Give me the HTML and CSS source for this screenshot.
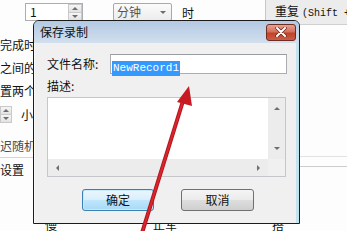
FILE: index.html
```html
<!DOCTYPE html>
<html>
<head>
<meta charset="utf-8">
<link rel="stylesheet" href="styles.css">
</head>
<body>
<div class="app">
  <div class="topbar">
    <div class="toolbar">
      <div class="spin">
        <span class="spin-val">1</span>
        <div class="spin-btns"><span class="sb"><i class="tri up"></i></span><span class="sb"><i class="tri down"></i></span></div>
      </div>
      <div class="combo"><span class="combo-text">分钟</span><i class="tri down"></i></div>
      <span class="unit">时</span>
    </div>
    <div class="side-head">重复<span class="mono">(Shift +</span></div>
  </div>
  <div class="main">
    <div class="leftcol">
      <div class="ln">完成时</div>
      <div class="ln">之间的</div>
      <div class="ln">置两个</div>
      <div class="spinrow">
        <div class="spin-btns small"><span class="sb"><i class="tri up"></i></span><span class="sb"><i class="tri down"></i></span></div>
        <span class="small-label">小</span>
      </div>
      <div class="ln gray sep">迟随机</div>
      <div class="ln">设置</div>
    </div>
    <div class="rightcol">
      <div class="rc-a"></div>
      <div class="rc-b"></div>
    </div>
  </div>
  <div class="bottomrow">
    <span class="b1">慢</span>
    <span class="b2">止军</span>
    <span class="b3">搭</span>
  </div>

  <div class="dialog">
    <div class="titlebar">
      <span class="title">保存录制</span>
      <button class="close" aria-label="关闭">
        <svg width="12" height="10" viewBox="0 0 12 10">
          <path d="M2 1 L10 9 M10 1 L2 9" stroke="#6a2418" stroke-width="3.4" stroke-linecap="round"/>
          <path d="M2 1 L10 9 M10 1 L2 9" stroke="#ffffff" stroke-width="2" stroke-linecap="round"/>
        </svg>
      </button>
    </div>
    <div class="dbody">
      <div class="frow">
        <span class="flabel">文件名称:</span>
        <div class="finput"><span class="sel">NewRecord1</span></div>
      </div>
      <div class="dlabel">描述:</div>
      <div class="textarea">
        <div class="ta-top">
          <div class="ta-content"></div>
          <div class="vscroll"><i class="tri up"></i><i class="tri down"></i></div>
        </div>
        <div class="ta-bottom">
          <div class="hscroll"><i class="tri left"></i><i class="tri right"></i></div>
          <div class="corner"></div>
        </div>
      </div>
      <div class="buttons">
        <button class="btn default">确定</button>
        <button class="btn">取消</button>
      </div>
    </div>
  </div>

  <svg class="arrow" width="347" height="231" viewBox="0 0 347 231">
    <path d="M142 233 L183 101" stroke="#b5141c" stroke-width="4" stroke-linecap="round"/>
    <path d="M142 233 L183 101" stroke="#d8262e" stroke-width="2"/>
    <polygon points="189,86 177,102 192,106" fill="#c81a22"/>
  </svg>
</div>
</body>
</html>
```

FILE: styles.css
```css
html, body {
  margin: 0;
  padding: 0;
}
body {
  font-family: "Noto Sans CJK SC", "Noto Sans", sans-serif;
  font-size: 12px;
  color: #111;
}
.app {
  position: relative;
  width: 347px;
  height: 231px;
  overflow: hidden;
  background: #fdfdfd;
}
.mono {
  font-family: "Liberation Mono", monospace;
  font-size: 10px;
  margin-left: 3px;
}

/* triangles */
.tri {
  display: block;
  width: 0;
  height: 0;
  border-style: solid;
}
.tri.up { border-width: 0 3px 3px 3px; border-color: transparent transparent #6d6d6d transparent; }
.tri.down { border-width: 3px 3px 0 3px; border-color: #6d6d6d transparent transparent transparent; }
.tri.left { border-width: 3px 3px 3px 0; border-color: transparent #6d6d6d transparent transparent; }
.tri.right { border-width: 3px 0 3px 3px; border-color: transparent transparent transparent #6d6d6d; }

/* top bar */
.topbar {
  display: flex;
  height: 25px;
}
.toolbar {
  flex: none;
  width: 265px;
  display: flex;
  align-items: flex-start;
  padding-top: 3px;
  box-sizing: border-box;
}
.spin {
  margin-left: 25px;
  width: 58px;
  height: 18px;
  box-sizing: border-box;
  border: 1px solid #abadb3;
  background: #fff;
  display: flex;
  justify-content: space-between;
}
.spin-val {
  padding-left: 4px;
  line-height: 16px;
  font-size: 12px;
}
.spin-btns {
  width: 14px;
  display: flex;
  flex-direction: column;
}
.sb {
  flex: 1;
  display: flex;
  align-items: center;
  justify-content: center;
  background: linear-gradient(#f6f6f6, #e2e2e2);
  border: 1px solid #c9c9c9;
  margin: 0 0 -1px 0;
}
.combo {
  margin-left: 30px;
  width: 59px;
  height: 18px;
  box-sizing: border-box;
  border: 1px solid #a9a9a9;
  border-radius: 2px;
  background: linear-gradient(#fbfbfb, #ececec);
  display: flex;
  align-items: center;
  justify-content: space-between;
  padding: 0 5px 0 3px;
}
.combo-text {
  color: #555;
  font-size: 12px;
  line-height: 16px;
}
.unit {
  margin-left: 10px;
  margin-top: 2px;
  font-size: 12px;
  line-height: 16px;
}
.side-head {
  flex: 1;
  min-width: 0;
  overflow: hidden;
  background: #ececec;
  border-left: 1px solid #c6c6c6;
  border-bottom: 1px solid #d0d0d0;
  padding: 3px 0 0 9px;
  font-size: 12px;
  line-height: 16px;
  white-space: nowrap;
}

/* main area */
.main {
  display: flex;
}
.leftcol {
  width: 33px;
  padding-top: 8px;
  white-space: nowrap;
}
.ln {
  line-height: 23px;
  font-size: 12px;
}
.gray {
  color: #4a4a4a;
}
.sep {
  line-height: 22px;
  margin-top: 13px;
  border-bottom: 1px solid #d6d6d6;
  width: 120px;
}
.spinrow {
  display: flex;
  align-items: center;
  margin-top: 4px;
  height: 16px;
}
.spin-btns.small {
  width: 15px;
  height: 16px;
}
.small-label {
  margin-left: 9px;
  font-size: 12px;
}
.rightcol {
  flex: 1;
}
.rc-a {
  height: 131px;
  border-bottom: 1px solid #e2e2e2;
}
.rc-b {
  height: 9px;
  border-bottom: 1px solid #cdcdcd;
}

.bottomrow {
  margin-top: 37px;
  display: flex;
  line-height: 14px;
  font-size: 12px;
}
.b1 { margin-left: 45px; }
.b2 { margin-left: 96px; }
.b3 { margin-left: 95px; }

/* dialog */
.dialog {
  position: absolute;
  left: 33px;
  top: 20px;
  width: 267px;
  height: 204px;
  box-sizing: border-box;
  border: 1px solid #1b1b1b;
  border-radius: 6px 6px 0 0;
  background: #c3e4ee;
  display: flex;
  flex-direction: column;
  overflow: hidden;
}
.titlebar {
  height: 22px;
  flex: none;
  display: flex;
  align-items: center;
  justify-content: space-between;
  background: linear-gradient(#b3c9e3, #d2dfee);
  padding: 0 3px 0 6px;
}
.title {
  font-size: 12px;
  color: #111;
  line-height: 16px;
}
.close {
  width: 30px;
  height: 17px;
  padding: 0;
  border: 1px solid #6e2c22;
  border-radius: 3px;
  background: linear-gradient(#e6a394 0%, #d4705c 45%, #c0432a 55%, #cc5d44 100%);
  display: flex;
  align-items: center;
  justify-content: center;
}
.dbody {
  flex: 1;
  margin-right: 3px;
  background: #f0f0f0;
  border-left: 1px solid #f8f8f8;
  padding: 11px 0 0 12px;
}
.frow {
  display: flex;
  align-items: center;
}
.flabel {
  width: 63px;
  font-size: 12px;
  line-height: 16px;
}
.finput {
  width: 177px;
  height: 20px;
  box-sizing: border-box;
  border: 1px solid #abadb3;
  border-top-color: #9a9ca3;
  background: #fff;
  padding: 2px 0 0 1px;
}
.sel {
  display: inline-block;
  background: #3399ff;
  color: #fff;
  font-family: "Liberation Mono", monospace;
  font-size: 11px;
  line-height: 15px;
  height: 15px;
  padding: 0 1px;
}
.dlabel {
  margin-top: 5px;
  line-height: 14px;
  font-size: 12px;
}
.textarea {
  margin-top: 4px;
  width: 239px;
  height: 80px;
  box-sizing: border-box;
  border: 1px solid #c4c6ca;
  background: #fff;
  display: flex;
  flex-direction: column;
}
.ta-top {
  flex: 1;
  display: flex;
}
.ta-content {
  flex: 1;
}
.vscroll {
  width: 17px;
  background: #ececec;
  display: flex;
  flex-direction: column;
  align-items: center;
  justify-content: space-between;
  padding: 9px 0 9px;
  box-sizing: border-box;
}
.ta-bottom {
  height: 17px;
  display: flex;
}
.hscroll {
  flex: 1;
  background: #ececec;
  display: flex;
  align-items: center;
  justify-content: space-between;
  padding: 0 8px 0 8px;
}
.corner {
  width: 17px;
  background: #f0f0f0;
}
.buttons {
  margin-top: 12px;
  padding-left: 35px;
  display: flex;
  gap: 27px;
}
.btn {
  width: 73px;
  height: 22px;
  padding: 0;
  border: 1px solid #707070;
  border-radius: 3px;
  background: linear-gradient(#f4f4f4 0%, #ebebeb 48%, #dddddd 52%, #cfcfcf 100%);
  font-family: "Noto Sans CJK SC", sans-serif;
  font-size: 12px;
  color: #111;
  line-height: 18px;
}
.btn.default {
  width: 72px;
  border-color: #3c7fb1;
  background: linear-gradient(#eaf6fd 0%, #d9f0fc 48%, #bee6fd 52%, #a7d9f5 100%);
  box-shadow: inset 0 0 0 1px #c9eafc;
}

.arrow {
  position: absolute;
  left: 0;
  top: 0;
  pointer-events: none;
}
```
